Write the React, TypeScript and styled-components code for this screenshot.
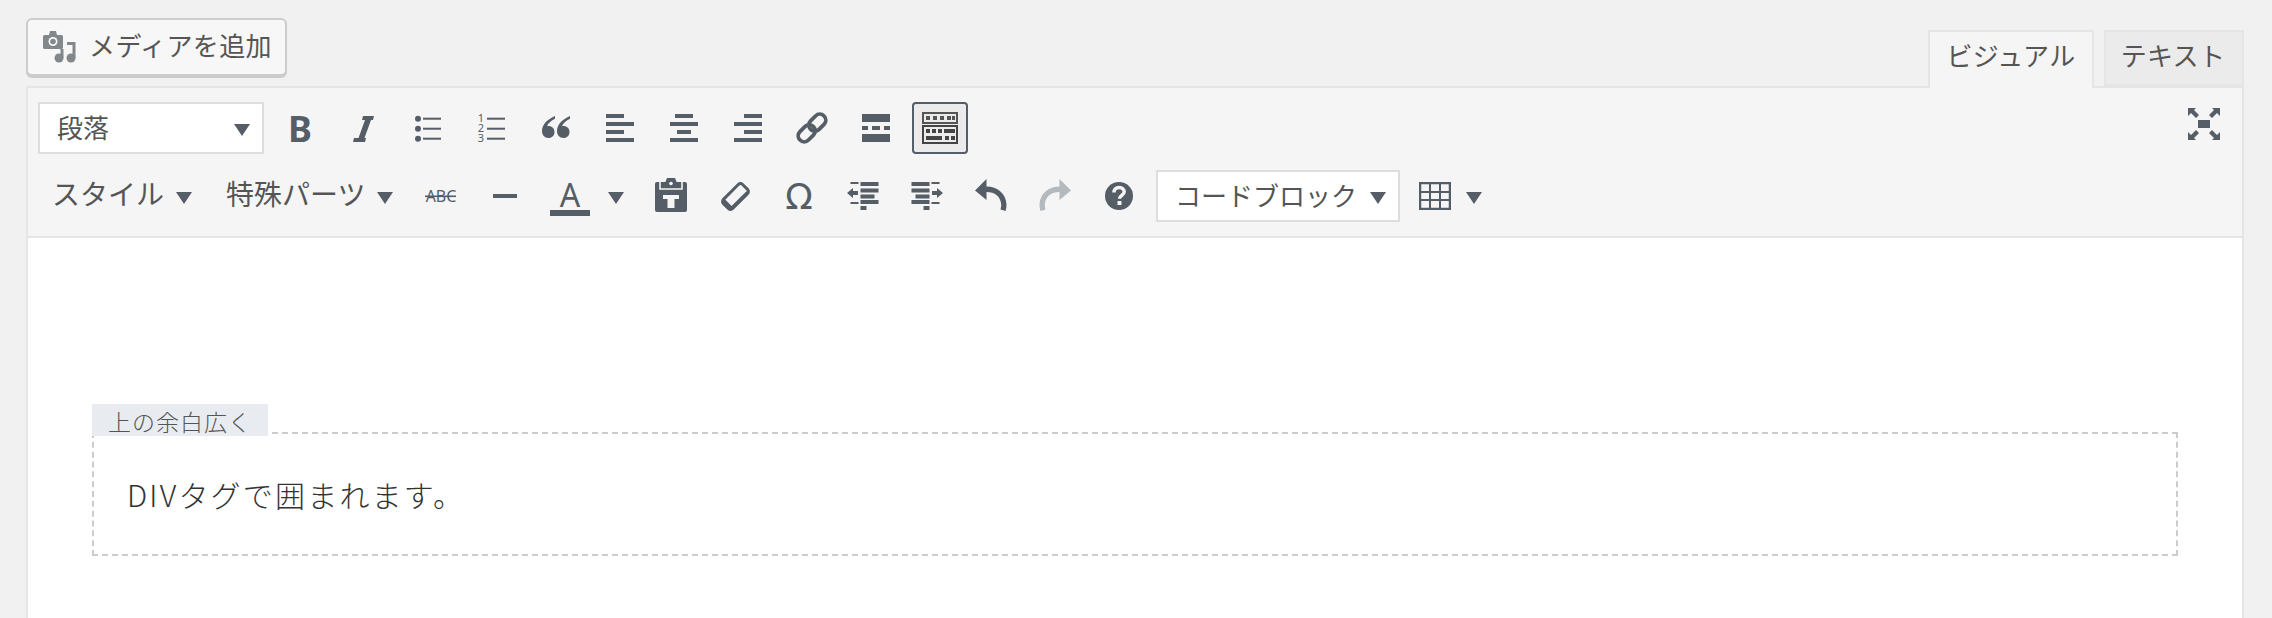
import React from "react";
import styled, { createGlobalStyle } from "styled-components";

const Global = createGlobalStyle`
  html, body { margin: 0; padding: 0; background: #f1f1f1; height: 618px; overflow: hidden; }
  body { font-family: "Noto Sans CJK JP", "Noto Sans", sans-serif; color: #555; }
`;
const Page = styled.div`
  padding: 18px 28px 0 26px;
  height: 600px;
  display: flex;
  flex-direction: column;
  overflow: hidden;
`;
const Header = styled.div`
  height: 68px;
  flex: none;
  display: flex;
  justify-content: space-between;
  align-items: flex-start;
`;
const MediaButton = styled.button`
  box-sizing: border-box;
  width: 261px;
  height: 58px;
  display: flex;
  align-items: center;
  gap: 12px;
  padding: 0 0 0 15px;
  background: #f7f7f7;
  border: 2px solid #ccc;
  border-radius: 6px;
  box-shadow: 0 2px 0 #ccc;
  font: 26px/1 "Noto Sans CJK JP", sans-serif;
  letter-spacing: 0.4px;
  color: #555;
`;
const Label = styled.span`
  display: block;
  line-height: 36px;
  margin-bottom: 5px;
`;
const Tabs = styled.div`
  display: flex;
  gap: 10px;
  margin-top: 12px;
  position: relative;
  z-index: 1;
`;
const Tab = styled.div<{ $active?: boolean }>`
  box-sizing: border-box;
  height: ${(p) => (p.$active ? 58 : 56)}px;
  width: ${(p) => (p.$active ? 166 : 140)}px;
  padding-right: ${(p) => (p.$active ? 0 : 2)}px;
  border: 2px solid #e5e5e5;
  border-bottom: ${(p) => (p.$active ? "none" : "2px solid #e5e5e5")};
  background: ${(p) => (p.$active ? "#f5f5f5" : "#ebebeb")};
  font-size: 26px;
  letter-spacing: 0.3px;
  line-height: 46px;
  text-align: center;
  color: #555;
`;
const Editor = styled.div`
  flex: 1;
  display: flex;
  flex-direction: column;
  border: 2px solid #e5e5e5;
  border-bottom: none;
  background: #fff;
  min-height: 0;
`;
const Toolbar = styled.div`
  flex: none;
  position: relative;
  box-sizing: border-box;
  height: 150px;
  padding: 14px 0 14px 10px;
  display: flex;
  flex-direction: column;
  gap: 16px;
  background: #f5f5f5;
  border-bottom: 2px solid #e5e5e5;
`;
const Row = styled.div`
  display: flex;
  align-items: center;
  height: 52px;
`;
const Select = styled.div<{ $w: number; $ml?: number; $mr?: number }>`
  box-sizing: border-box;
  width: ${(p) => p.$w}px;
  height: 52px;
  margin-left: ${(p) => p.$ml ?? 0}px;
  margin-right: ${(p) => p.$mr ?? 0}px;
  padding: 0 12px 0 17px;
  display: flex;
  align-items: center;
  justify-content: space-between;
  background: #fff;
  border: 2px solid #ddd;
  font-size: 26px;
  color: #555;
  ${Label} {
    margin-bottom: 3px;
  }
`;
const Arrow = styled.i`
  display: block;
  flex: none;
  width: 0;
  height: 0;
  margin-top: 4px;
  border-left: 8px solid transparent;
  border-right: 8px solid transparent;
  border-top: 12px solid #555d66;
`;
const IconCell = styled.div`
  width: 64px;
  height: 52px;
  flex: none;
  display: flex;
  align-items: center;
  justify-content: center;
`;
const ActiveCell = styled.div`
  box-sizing: border-box;
  width: 56px;
  height: 52px;
  margin: 0 4px;
  flex: none;
  display: flex;
  align-items: center;
  justify-content: center;
  background: #ebebeb;
  border: 2px solid #555d66;
  border-radius: 4px;
`;
const MenuButton = styled.div<{ $w: number }>`
  width: ${(p) => p.$w}px;
  flex: none;
  box-sizing: border-box;
  padding-left: 14px;
  display: flex;
  align-items: center;
  gap: 12px;
  font-size: 28px;
  color: #555;
  ${Label} {
    margin-bottom: 7px;
  }
`;
const SplitButton = styled.div<{ $w: number; $gap: number; $pl: number }>`
  width: ${(p) => p.$w}px;
  flex: none;
  box-sizing: border-box;
  padding-left: ${(p) => p.$pl}px;
  display: flex;
  align-items: center;
  gap: ${(p) => p.$gap}px;
`;
const FullScreen = styled.div`
  position: absolute;
  top: 12px;
  right: 14px;
  width: 48px;
  height: 48px;
`;
const Content = styled.div`
  flex: 1;
  padding: 194px 64px 0 64px;
`;
const Box = styled.div`
  position: relative;
  box-sizing: border-box;
  height: 124px;
  padding-left: 33px;
  display: flex;
  align-items: center;
  border: 2px dashed #ccc;
  font-size: 30px;
  letter-spacing: 2.2px;
  font-weight: 300;
  color: #333;
`;
const BoxLabel = styled.div`
  position: absolute;
  top: -30px;
  left: -2px;
  box-sizing: border-box;
  width: 176px;
  height: 32px;
  padding-left: 16px;
  background: #e8ecf1;
  font-size: 23px;
  letter-spacing: 1px;
  line-height: 34px;
  font-weight: 300;
  color: #555;
`;

const C = "#555d66";
const BG = "#f5f5f5";
const Svg: React.FC<{ children: React.ReactNode }> = ({ children }) => (
  <svg width={48} height={48} viewBox="0 0 48 48" fill={C}>
    {children}
  </svg>
);
const Bars: React.FC<{ align: "l" | "c" | "r" }> = ({ align }) => {
  const x = (w: number) => (align === "l" ? 10 : align === "c" ? 24 - w / 2 : 38 - w);
  return (
    <Svg>
      <rect x={x(18)} y={10} width={18} height={4} />
      <rect x={x(28)} y={18} width={28} height={4} />
      <rect x={x(align === "c" ? 14 : 18)} y={26} width={align === "c" ? 14 : 18} height={4} />
      <rect x={x(28)} y={34} width={28} height={4} />
    </Svg>
  );
};
const SvgLabel = styled.text<{ $size: number; $weight?: number; $family?: string }>`
  font-family: ${(p) => p.$family ?? '"Noto Sans", sans-serif'};
  font-size: ${(p) => p.$size}px;
  font-weight: ${(p) => p.$weight ?? 400};
  text-anchor: middle;
`;
const BoldIcon = () => (
  <Svg>
    <SvgLabel x={24} y={38} $size={36} $weight={700}>B</SvgLabel>
  </Svg>
);
const ItalicIcon = () => (
  <Svg>
    <path d="M23 12H34L33 16H31L24.500 34H26L25 38H13L14 34H18.500L25 16H22z" />
  </Svg>
);
const BulletIcon = () => (
  <Svg>
    <circle cx={14} cy={14.7} r={3} />
    <circle cx={14} cy={24.7} r={3} />
    <circle cx={14} cy={34.7} r={3} />
    <rect x={19} y={13.7} width={18} height={2} />
    <rect x={19} y={23.7} width={18} height={2} />
    <rect x={19} y={33.7} width={18} height={2} />
  </Svg>
);
const NumberIcon = () => (
  <Svg>
    <SvgLabel $size={11}>
      <tspan x={13} y={18}>1</tspan>
      <tspan x={13} y={28}>2</tspan>
      <tspan x={13} y={38}>3</tspan>
    </SvgLabel>
    <rect x={19} y={13.7} width={18} height={2} />
    <rect x={19} y={23.7} width={18} height={2} />
    <rect x={19} y={33.7} width={18} height={2} />
  </Svg>
);
const QuoteMark = "c-7 3-13 8-13 15c0 4 2.500 7 6.500 7c3.500 0 6-2.500 6-6c0-3.500-2.500-6-6-6c-.5 0-1 0-1.500.2c1-3 4-5.500 8-7.500z";
const QuoteIcon = () => (
  <Svg>
    <path d={`M23 12${QuoteMark}`} />
    <path d={`M38 12${QuoteMark}`} />
  </Svg>
);
const LinkIcon = () => (
  <Svg>
    <g fill="none" stroke={C} strokeWidth={3.8} transform="rotate(-45 24 24)">
      <rect x={7} y={18} width={19} height={12} rx={6} />
      <rect x={22} y={18} width={19} height={12} rx={6} />
    </g>
  </Svg>
);
const MoreIcon = () => (
  <Svg>
    <rect x={10} y={10} width={28} height={8} />
    <rect x={10} y={22} width={6} height={4} />
    <rect x={20} y={22} width={8} height={4} />
    <rect x={32} y={22} width={6} height={4} />
    <rect x={10} y={30} width={28} height={8} />
  </Svg>
);
const KitchenIcon = () => (
  <svg width={36} height={32} viewBox="0 0 36 32" fill="#444">
    <rect x={1} y={1} width={34} height={10} fill="none" stroke="#555" strokeWidth={2} />
    <rect x={1} y={14} width={34} height={17} fill="none" stroke="#444" strokeWidth={2} />
    {[4, 11, 18, 25].map((x) => (
      <rect key={x} x={x} y={4} width={4} height={4} fill="#555" />
    ))}
    <rect x={30} y={4} width={3} height={4} fill="#555" />
    {[4, 10, 16].map((x) => (
      <rect key={x} x={x} y={17} width={4} height={4} />
    ))}
    <rect x={22} y={17} width={11} height={4} />
    <rect x={4} y={24} width={16} height={4} />
    <rect x={23} y={24} width={4} height={4} />
    <rect x={29} y={24} width={4} height={4} />
  </svg>
);
const FullIcon = () => (
  <Svg>
    <rect x={18} y={20} width={12} height={8} />
    <path d="M8 8h8l-2 2 5 5-3 3-5-5-3 3zM40 8h-8l2 2-5 5 3 3 5-5 3 3zM8 40h8l-2-2 5-5-3-3-5 5-3-3zM40 40h-8l2-2-5-5 3-3 5 5 3-3z" />
  </Svg>
);
const StrikeIcon = () => (
  <Svg>
    <SvgLabel x={24} y={30} $size={16}>ABC</SvgLabel>
    <rect x={8} y={23.500} width={31} height={1.6} />
  </Svg>
);
const HrIcon = () => (
  <Svg>
    <rect x={12} y={22} width={24} height={4} />
  </Svg>
);
const ColorIcon = () => (
  <svg width={40} height={48} viewBox="0 0 40 48" fill={C}>
    <SvgLabel x={20} y={35} $size={32}>A</SvgLabel>
    <rect x={0} y={38} width={40} height={6} />
  </svg>
);
const PasteIcon = () => (
  <Svg>
    <rect x={8} y={10} width={32} height={30} rx={2} />
    <path d="M13 9V17H35V9" fill="none" stroke={BG} strokeWidth={1.6} />
    <path d="M16 16L20 6H28L32 16z" />
    <circle cx={24} cy={11.500} r={1.800} fill={BG} />
    <rect x={16} y={23} width={16} height={4} fill={BG} />
    <rect x={20.500} y={23} width={7} height={13} fill={BG} />
  </Svg>
);
const EraserIcon = () => (
  <Svg>
    <g transform="rotate(-45 24.500 24.500)">
      <rect x={11} y={18} width={27} height={13} rx={3} fill="none" stroke={C} strokeWidth={3} />
      <path d="M12 18h3v13h-3a2 2 0 0 1-2-2v-9a2 2 0 0 1 2-2z" />
      <rect x={11} y={28.500} width={25} height={2.500} />
    </g>
  </Svg>
);
const OmegaIcon = () => (
  <Svg>
    <SvgLabel x={24} y={37} $size={36} $family={'"DejaVu Sans", sans-serif'}>Ω</SvgLabel>
  </Svg>
);
const IndentShape: React.FC<{ mirror?: boolean }> = ({ mirror }) => (
  <Svg>
    <g transform={mirror ? "matrix(-1 0 0 1 48 0)" : undefined}>
      <path d="M8 21l6-5v3h5v4h-5v3z" />
      <rect x={11.500} y={10} width={8} height={2} />
      <rect x={21.500} y={10} width={18} height={4} />
      <rect x={21.500} y={16.500} width={18} height={4} />
      <rect x={21.500} y={22.500} width={14} height={4} />
      <rect x={11.500} y={30} width={8} height={2} />
      <rect x={21.500} y={28} width={18} height={4} />
      <rect x={21.500} y={34} width={6} height={4} />
    </g>
  </Svg>
);
const UndoIcon: React.FC<{ redo?: boolean }> = ({ redo }) => (
  <svg width={48} height={48} viewBox="0 0 48 48" fill={redo ? "#b4b9be" : C}>
    <g transform={redo ? "matrix(-1 0 0 1 48 0)" : undefined}>
      <path d="M8 18.500L19.500 7v7.500c11 0 19.500 7 20 18 0 2-.3 4.500-1 6.500l-5-1.500c.5-2 .8-3.500.7-5-.5-8-6.500-12.500-14.700-12.500V28z" />
    </g>
  </svg>
);
const HelpIcon = () => (
  <Svg>
    <circle cx={24} cy={24} r={14} />
    <path d="M19 20.500c0-3 2-5 5.200-5 3 0 5 1.800 5 4.300 0 3.500-4.700 3.700-4.700 7" fill="none" stroke={BG} strokeWidth={3.500} />
    <rect x={22.500} y={29} width={4} height={4} fill={BG} />
  </Svg>
);
const TableIcon = () => (
  <svg width={32} height={28} viewBox="0 0 32 28" fill="none" stroke={C} strokeWidth={2}>
    <rect x={1} y={1} width={30} height={26} strokeWidth={2.500} />
    <path d="M1 10h30M1 18h30M11 1v26M21 1v26" />
  </svg>
);
const MediaIcon = () => (
  <svg width={34} height={32} viewBox="0 0 34 32" fill="#82878c">
    <path d="M6 4l1-4h6l1 4h4.500a1.500 1.500 0 0 1 1.500 1.500V16.500a1.500 1.500 0 0 1-1.500 1.500H1.500A1.500 1.500 0 0 1 0 16.500V5.500A1.500 1.500 0 0 1 1.500 4z" />
    <circle cx={10} cy={10.500} r={4.500} fill="#f7f7f7" />
    <circle cx={10} cy={10.500} r={2.800} />
    <circle cx={16} cy={27} r={4.500} />
    <rect x={17.500} y={18} width={3} height={9} />
    <circle cx={28} cy={27} r={4.500} />
    <rect x={29.500} y={11} width={3} height={16} />
    <rect x={24} y={11} width={8} height={3} />
  </svg>
);

export default function App() {
  return (
    <>
      <Global />
      <Page>
        <Header>
          <MediaButton>
            <MediaIcon />
            <Label>メディアを追加</Label>
          </MediaButton>
          <Tabs>
            <Tab $active>ビジュアル</Tab>
            <Tab>テキスト</Tab>
          </Tabs>
        </Header>
        <Editor>
          <Toolbar>
            <Row>
              <Select $w={226} $mr={4}>
                <Label>段落</Label>
                <Arrow />
              </Select>
              <IconCell><BoldIcon /></IconCell>
              <IconCell><ItalicIcon /></IconCell>
              <IconCell><BulletIcon /></IconCell>
              <IconCell><NumberIcon /></IconCell>
              <IconCell><QuoteIcon /></IconCell>
              <IconCell><Bars align="l" /></IconCell>
              <IconCell><Bars align="c" /></IconCell>
              <IconCell><Bars align="r" /></IconCell>
              <IconCell><LinkIcon /></IconCell>
              <IconCell><MoreIcon /></IconCell>
              <ActiveCell><KitchenIcon /></ActiveCell>
            </Row>
            <Row>
              <MenuButton $w={174}><Label>スタイル</Label><Arrow /></MenuButton>
              <MenuButton $w={197}><Label>特殊パーツ</Label><Arrow /></MenuButton>
              <IconCell><StrikeIcon /></IconCell>
              <IconCell><HrIcon /></IconCell>
              <SplitButton $w={102} $pl={13} $gap={18}><ColorIcon /><Arrow /></SplitButton>
              <IconCell><PasteIcon /></IconCell>
              <IconCell><EraserIcon /></IconCell>
              <IconCell><OmegaIcon /></IconCell>
              <IconCell><IndentShape /></IconCell>
              <IconCell><IndentShape mirror /></IconCell>
              <IconCell><UndoIcon /></IconCell>
              <IconCell><UndoIcon redo /></IconCell>
              <IconCell><HelpIcon /></IconCell>
              <Select $w={244} $ml={5}>
                <Label>コードブロック</Label>
                <Arrow />
              </Select>
              <SplitButton $w={90} $pl={19} $gap={15}><TableIcon /><Arrow /></SplitButton>
            </Row>
            <FullScreen><FullIcon /></FullScreen>
          </Toolbar>
          <Content>
            <Box>
              <BoxLabel>上の余白広く</BoxLabel>
              DIVタグで囲まれます。
            </Box>
          </Content>
        </Editor>
      </Page>
    </>
  );
}
